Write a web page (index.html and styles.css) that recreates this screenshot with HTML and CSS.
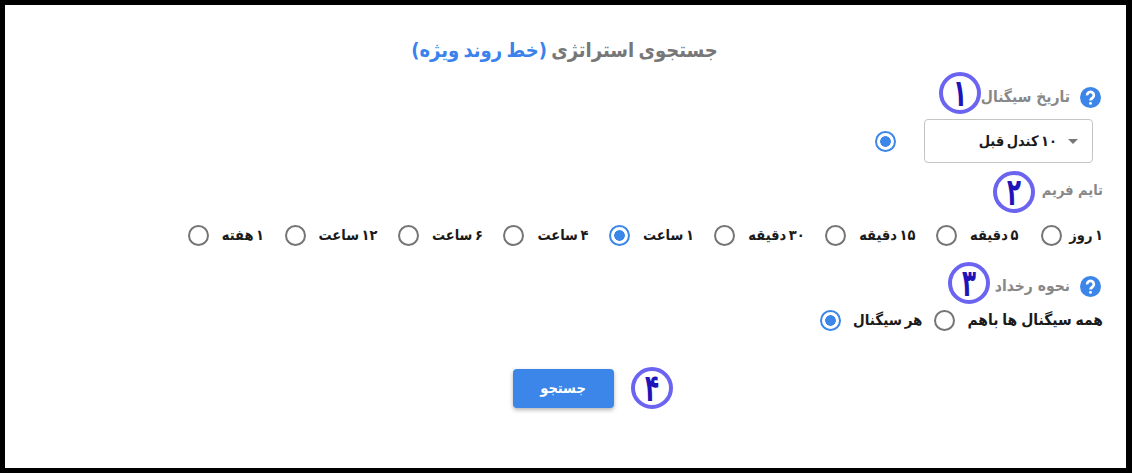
FILE: index.html
```html
<!DOCTYPE html>
<html lang="fa" dir="rtl">
<head>
<meta charset="utf-8">
<title>جستجوی استراتژی</title>
<link rel="stylesheet" href="styles.css">
</head>
<body>
<main class="frame">
  <h1 class="title">جستجوی استراتژی <span class="accent">(خط روند ویژه)</span></h1>

  <section class="field field-date">
    <div class="label-row">
      <svg class="help" viewBox="0 0 20 20"><circle cx="10" cy="10" r="10"/><path d="M6.8 8a3.2 3.2 0 1 1 5 2.5c-1.1.7-1.8 1.2-1.8 2.3" /><circle class="dot" cx="10" cy="15.6" r="1.4"/></svg>
      <span class="label">تاریخ سیگنال</span>
      <span class="mark"><span class="digit">۱</span></span>
    </div>
    <div class="date-row">
      <div class="select"><span class="caret"></span><span class="opt">۱۰ کندل قبل</span></div>
      <span class="radio on"></span>
    </div>
  </section>

  <section class="field field-time">
    <div class="label-row">
      <span class="label">تایم فریم</span>
      <span class="mark"><span class="digit">۲</span></span>
    </div>
    <div class="radios time">
      <label class="item"><span class="opt">۱ روز</span><span class="radio"></span></label>
      <label class="item"><span class="opt">۵ دقیقه</span><span class="radio"></span></label>
      <label class="item"><span class="opt">۱۵ دقیقه</span><span class="radio"></span></label>
      <label class="item"><span class="opt">۳۰ دقیقه</span><span class="radio"></span></label>
      <label class="item"><span class="opt">۱ ساعت</span><span class="radio on"></span></label>
      <label class="item"><span class="opt">۴ ساعت</span><span class="radio"></span></label>
      <label class="item"><span class="opt">۶ ساعت</span><span class="radio"></span></label>
      <label class="item"><span class="opt">۱۲ ساعت</span><span class="radio"></span></label>
      <label class="item"><span class="opt">۱ هفته</span><span class="radio"></span></label>
    </div>
  </section>

  <section class="field field-event">
    <div class="label-row">
      <svg class="help" viewBox="0 0 20 20"><circle cx="10" cy="10" r="10"/><path d="M6.8 8a3.2 3.2 0 1 1 5 2.5c-1.1.7-1.8 1.2-1.8 2.3" /><circle class="dot" cx="10" cy="15.6" r="1.4"/></svg>
      <span class="label">نحوه رخداد</span>
      <span class="mark"><span class="digit">۳</span></span>
    </div>
    <div class="radios event">
      <label class="item item-event"><span class="opt">همه سیگنال ها باهم</span><span class="radio"></span></label>
      <label class="item item-event"><span class="opt">هر سیگنال</span><span class="radio on"></span></label>
    </div>
  </section>

  <div class="actions">
    <button class="search" type="button">جستجو</button>
    <span class="mark"><span class="digit">۴</span></span>
  </div>
</main>
</body>
</html>
```
FILE: styles.css
```css
* { box-sizing: border-box; }
html, body { margin: 0; height: 473px; overflow: hidden; background: #000; }
body { padding: 5px 6px 5px 5px; font-family: "DejaVu Sans Condensed", "DejaVu Sans", sans-serif; font-stretch: condensed; }
.frame { background: #fff; height: 463px; padding: 0 23px 0 24px; overflow: hidden; }
.title { margin: 0; padding: 30px 3px 0 0; height: 67px; text-align: center; font-size: 20px; line-height: 30px; font-weight: 700; color: #777; word-spacing: -2px; }
.accent { color: #3b82ec; }
.label-row { display: flex; align-items: center; height: 42px; }
.help { width: 21px; height: 21px; flex: none; margin-left: 10px; margin-right: 2px; }
.help circle { fill: #3b86e8; }
.help path { fill: none; stroke: #fff; stroke-width: 2.6; }
.help .dot { fill: #fff; }
.label { font-size: 15.5px; font-weight: 700; color: #888; white-space: nowrap; margin-left: 3px; }
.field-date .label, .field-date .help { margin-top: 8px; }
.field-date .label { margin-left: 0; }
.field-time .label { font-size: 14.5px; margin-left: 7px; margin-bottom: 4px; }
.field-event .label, .field-event .help { margin-top: 6px; }
.field-event .label { margin-left: 5px; }
.mark { width: 42px; height: 42px; flex: none; border: 4px solid #6a64f1; border-radius: 50%; display: flex; align-items: center; justify-content: center; color: #1f14b8; font-size: 29px; font-weight: 700; line-height: 1; background: #fff; }
.digit { display: block; transform: scale(.88, 1.3); }
.date-row { display: flex; align-items: center; margin-top: 5px; height: 44px; padding-right: 10px; }
.select { width: 169px; height: 44px; border: 1px solid #c4c4c4; border-radius: 4px; display: flex; align-items: center; padding-right: 14px; gap: 11px; }
.caret { width: 0; height: 0; border-left: 5px solid transparent; border-right: 5px solid transparent; border-top: 5px solid #777; }
.opt { font-size: 14.5px; font-weight: 700; color: #1a1a1a; white-space: nowrap; word-spacing: -2px; }
.radio { width: 21px; height: 21px; flex: none; border: 2px solid #757575; border-radius: 50%; display: block; }
.radio.on { border-color: #3b86e8; background: radial-gradient(circle, #3b86e8 0 5px, transparent 5.6px); }
.date-row .radio { margin-right: 28px; }
.field-time { margin-top: 8px; }
.radios { display: flex; align-items: center; }
.time { height: 40px; margin-top: 2px; }
.item { display: flex; align-items: center; gap: 13px; margin-left: 20.5px; }
.item:first-child { gap: 7px; margin-left: 23px; }
.field-event { margin-top: 7px; }
.event { height: 30px; margin-top: 1px; }
.item.item-event { gap: 12px; margin-left: 12px; }
.item-event .opt { font-size: 15.5px; word-spacing: -1px; }
.item-event:last-child .opt { font-size: 15px; word-spacing: -2px; }
.actions { display: grid; grid-template-columns: 1fr 101px 1fr; align-items: center; margin-top: 32px; padding-right: 6px; direction: ltr; }
.search { grid-column: 2; height: 39px; border: 0; border-radius: 4px; background: #3b86e8; color: #fff; font: 700 14.5px "DejaVu Sans Condensed", "DejaVu Sans", sans-serif; box-shadow: 0 2px 4px rgba(0,0,0,.3); }
.actions .mark { grid-column: 3; margin-left: 17px; }
```
